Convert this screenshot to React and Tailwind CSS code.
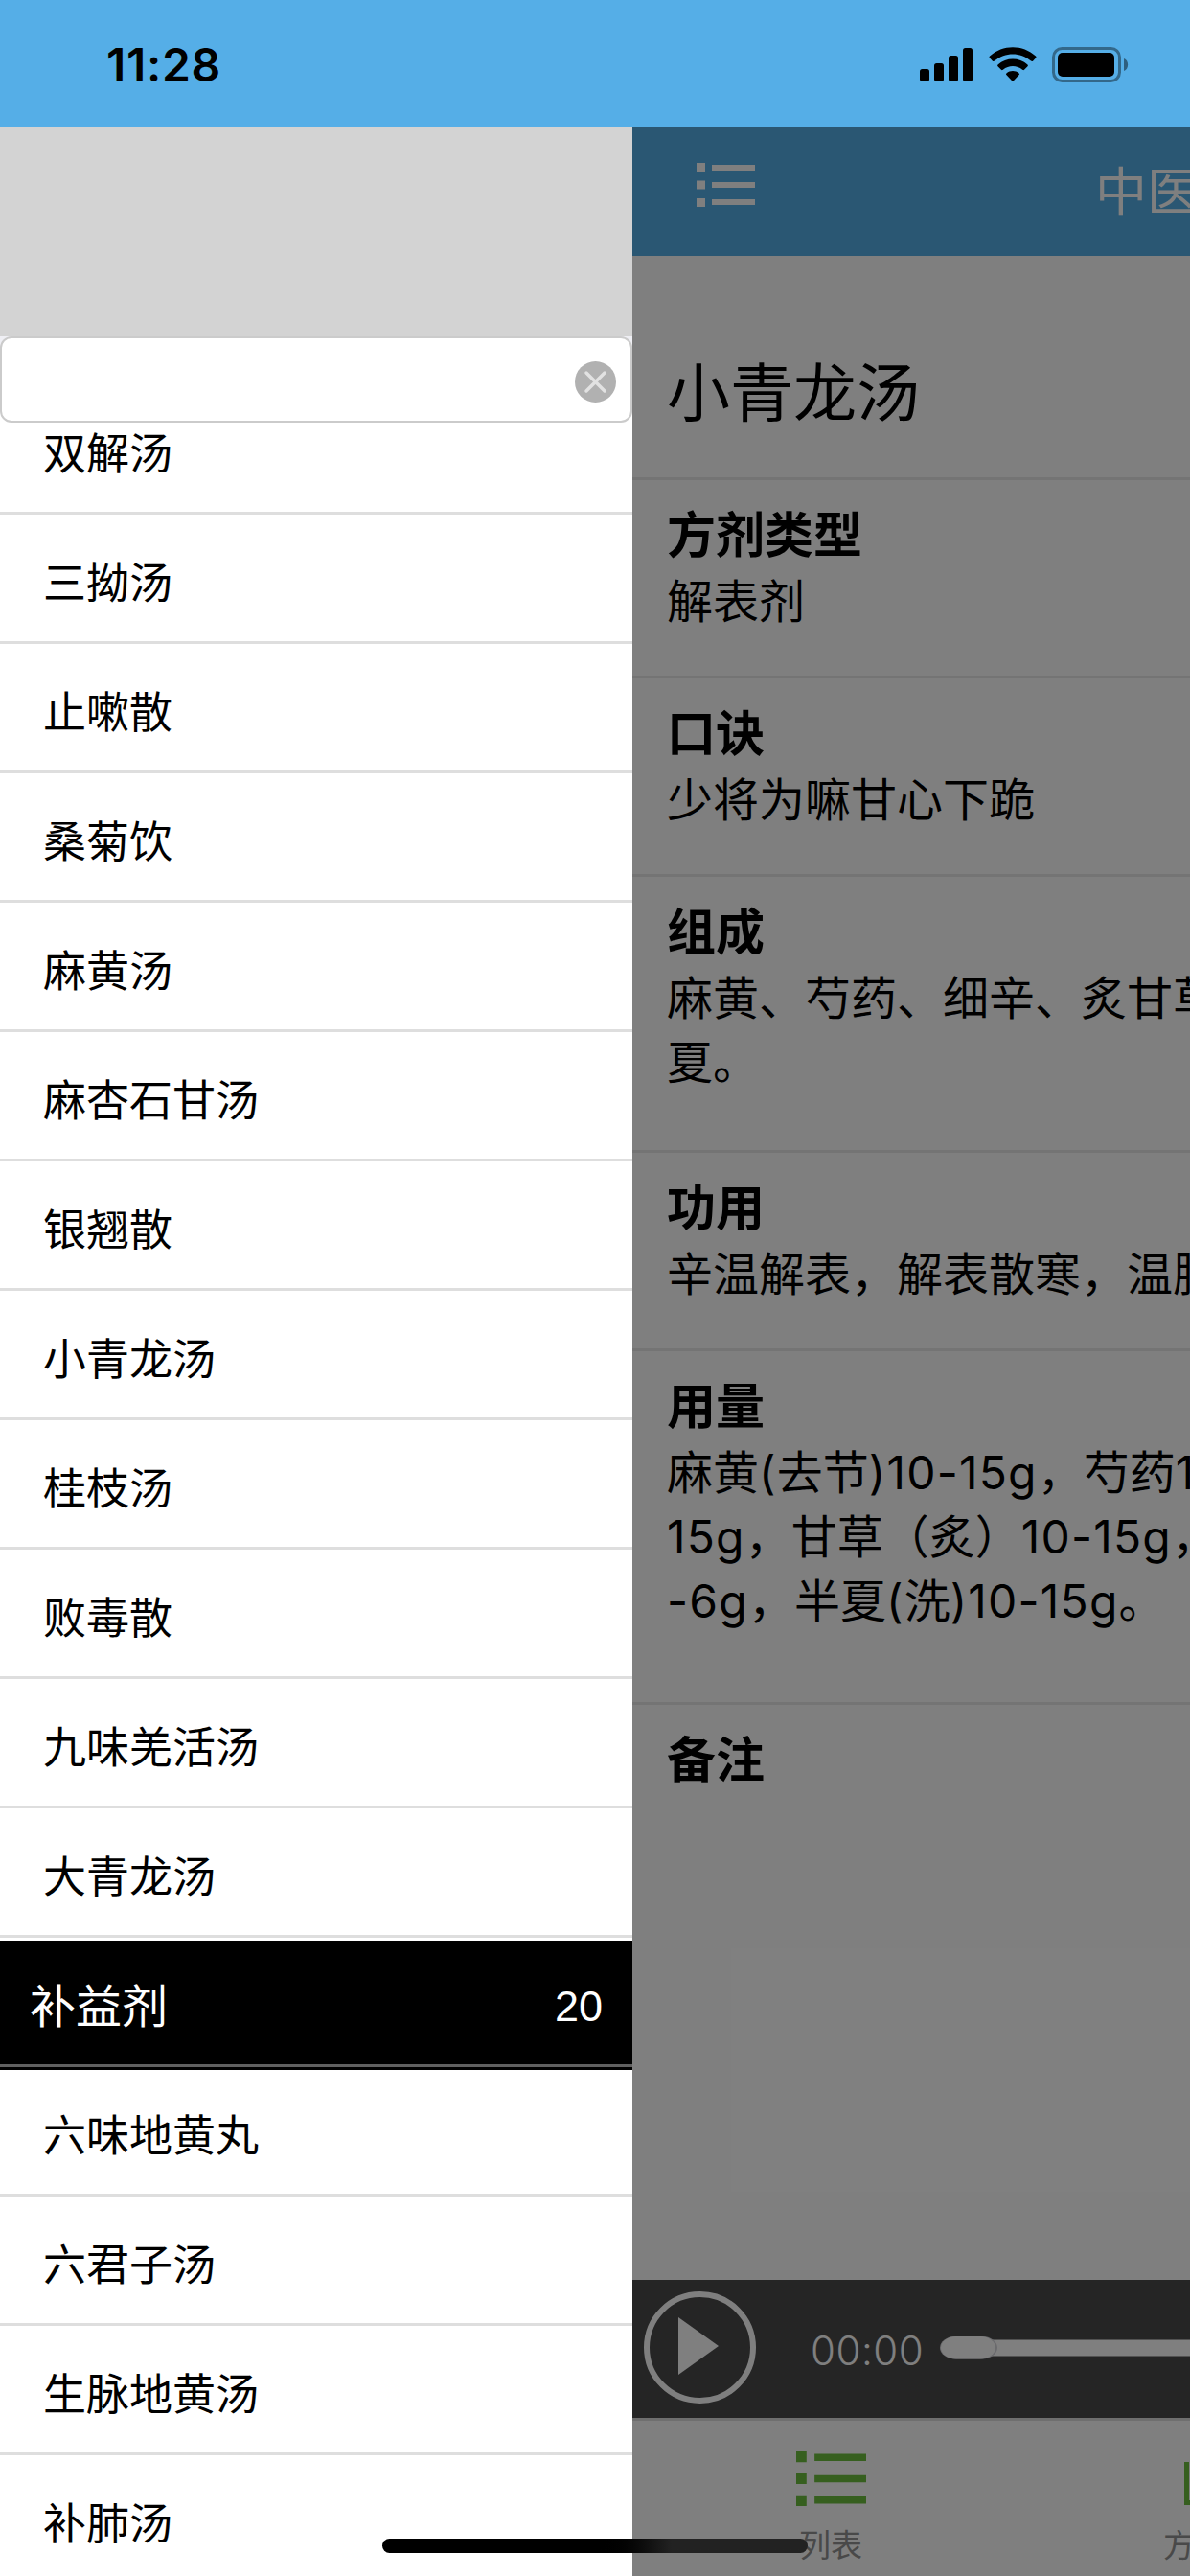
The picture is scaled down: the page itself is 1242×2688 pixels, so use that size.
import clsx from "clsx";

const formulas = [
  { name: "双解汤" },
  { name: "三拗汤" },
  { name: "止嗽散" },
  { name: "桑菊饮" },
  { name: "麻黄汤" },
  { name: "麻杏石甘汤" },
  { name: "银翘散" },
  { name: "小青龙汤" },
  { name: "桂枝汤" },
  { name: "败毒散" },
  { name: "九味羌活汤" },
  { name: "大青龙汤" },
  { name: "补益剂", count: 20 },
  { name: "六味地黄丸" },
  { name: "六君子汤" },
  { name: "生脉地黄汤" },
  { name: "补肺汤" },
];

const sections = [
  { title: "方剂类型", lines: ["解表剂"], height: "h-[207px]" },
  { title: "口诀", lines: ["少将为嘛甘心下跪"], height: "h-[207px]" },
  {
    title: "组成",
    lines: ["麻黄、芍药、细辛、炙甘草", "夏。"],
    height: "h-[288px]",
  },
  {
    title: "功用",
    lines: ["辛温解表，解表散寒，温肺"],
    height: "h-[207px]",
  },
  {
    title: "用量",
    lines: ["麻黄(去节)10-15g，芍药1", "15g，甘草（炙）10-15g，", "-6g，半夏(洗)10-15g。"],
    height: "h-[369px]",
  },
];

const StatusBar = () => (
  <div className="flex h-[132px] shrink-0 items-start justify-between bg-[#55aee7] pl-[111px] pr-[64px]">
    <span className="mt-[39px] font-['Inter'] text-[48px] leading-[58px] font-semibold tracking-[0.7px]">
      11:28
    </span>
    <div className="mt-[49px] flex items-start">
      <svg width="56" height="37" viewBox="0 0 56 37" className="mr-[16px]">
        <rect x="0" y="23" width="10" height="13" rx="2.5" />
        <rect x="15" y="17" width="10" height="19" rx="2.5" />
        <rect x="30" y="9" width="10" height="27" rx="2.5" />
        <rect x="45" y="1" width="10" height="35" rx="2.5" />
      </svg>
      <svg width="50" height="37" viewBox="0 0 50 37" className="mr-[16px]">
        <path d="M1 11.5 Q0 10.500 1 9.500 C14.500 -3 35.500 -3 49 9.500 Q50 10.500 49 11.500 L46 14.700 Q45 15.500 44 14.600 C33 5 17 5 6 14.600 Q5 15.500 4 14.700 Z" />
        <path d="M9.500 20.200 Q8.600 19.300 9.500 18.400 C18.500 10.500 31.500 10.500 40.500 18.400 Q41.400 19.300 40.500 20.200 L37 23.800 Q36.200 24.600 35.200 23.800 C29 18.800 21 18.800 14.800 23.800 Q13.800 24.600 13 23.800 Z" />
        <path d="M18.300 29 Q17.500 28.200 18.400 27.400 C22.500 24.200 27.500 24.200 31.600 27.400 Q32.500 28.200 31.700 29 L25.800 35.300 Q25 36.200 24.200 35.300 Z" />
      </svg>
      <svg width="80" height="37" viewBox="0 0 80 37">
        <rect
          x="1.500"
          y="1.500"
          width="69"
          height="34"
          rx="9"
          fill="none"
          stroke="#000"
          strokeOpacity="0.4"
          strokeWidth="3"
        />
        <rect x="6" y="6" width="59" height="25" rx="5" />
        <path d="M75 12 C80.500 14 80.500 23 75 25 Z" fillOpacity="0.45" />
      </svg>
    </div>
  </div>
);

const ListIcon = ({ className }) => (
  <svg viewBox="0 0 61 46" preserveAspectRatio="none" className={className}>
    <path d="M0 0H9V9H0ZM0 18.500H9V27.500H0ZM0 37H9V46H0ZM16 2H61V8H16ZM16 20H61V26H16ZM16 38H61V44H16Z" />
  </svg>
);

const FormulaRow = ({ name, count }) => (
  <li
    className={clsx(
      "flex h-[135px] shrink-0 flex-col",
      count ? "bg-black text-white" : "bg-white text-black"
    )}
  >
    <div
      className={clsx(
        "flex h-[129px] items-center justify-between pt-[8px]",
        count ? "px-[31px] text-[48px]" : "pl-[45px] text-[45px]"
      )}
    >
      <span>{name}</span>
      {count && (
        <span className="font-['Liberation_Sans'] text-[45px]">{count}</span>
      )}
    </div>
    <div className={clsx("h-[3px]", count ? "bg-[#606060]" : "bg-[#dedede]")} />
  </li>
);

const Sidebar = () => (
  <aside className="flex w-[660px] shrink-0 flex-col overflow-hidden bg-white">
    <div className="h-[219px] shrink-0 bg-[#d3d3d3]" />
    <div className="shrink-0 bg-linear-to-b from-[#efeff4] from-50% to-white to-50%">
      <div className="flex h-[90px] items-center justify-end rounded-[12px] border-2 border-[#cbcbcb] bg-white pr-[15px]">
        <svg width="43" height="43" viewBox="0 0 43 43" className="mt-[5px]">
          <circle cx="21.500" cy="21.500" r="21.500" fill="#b1b1b1" />
          <path
            d="M12 12L31 31M31 12L12 31"
            stroke="#e2e2e2"
            strokeWidth="3.500"
            strokeLinecap="round"
          />
        </svg>
      </div>
    </div>
    <div className="min-h-0 flex-1 overflow-hidden">
      <ul className="-mt-[36px] flex flex-col">
        {formulas.map((item) => (
          <FormulaRow key={item.name} {...item} />
        ))}
      </ul>
    </div>
  </aside>
);

// doses get a little extra tracking, the Chinese text around them does not
const Line = ({ text }) => (
  <p className="text-[48px] leading-[67px]">
    {text.split(/([\w()-]+)/).map((part, i) =>
      i % 2 ? (
        <span key={i} className="tracking-[1.2px]">
          {part}
        </span>
      ) : (
        part
      )
    )}
  </p>
);

const Player = () => (
  <div className="flex h-[144px] shrink-0 items-center bg-[#4a4a4a] pl-[12px]">
    <svg width="117" height="117" viewBox="0 0 117 117" className="-mt-[3px] shrink-0">
      <circle cx="58.500" cy="58.500" r="55.500" fill="none" stroke="#fff" strokeWidth="6" />
      <path d="M36 27L78 57L36 87Z" fill="#fff" />
    </svg>
    <span className="mt-[3px] ml-[57px] w-[134px] shrink-0 font-['Inter'] text-[42px] leading-none font-light tracking-[0.5px] text-white">
      00:00
    </span>
    <svg width="262" height="24" viewBox="0 0 262 24" className="-mt-[3px] shrink-0">
      <rect x="30" y="3.500" width="232" height="17" fill="#fff" />
      <rect x="1" y="0" width="60" height="23.500" rx="16" fill="#d4d4da" />
      <rect x="2" y="0" width="57" height="23.500" rx="16" fill="#fff" />
    </svg>
  </div>
);

const TabBar = () => (
  <nav className="flex h-[165px] shrink-0 border-t-3 border-[#dedede] text-[33px] leading-[36px] text-[#929292]">
    <div className="flex w-[414px] shrink-0 flex-col items-center pt-[32px]">
      <ListIcon className="h-[57px] w-[73px] fill-[#6cbe3e]" />
      <span className="mt-[23px]">列表</span>
    </div>
    <div className="flex w-[168px] shrink-0 flex-col pt-[32px] pl-[141px]">
      <svg width="27" height="57" viewBox="0 0 27 57" className="fill-[#6cbe3e]">
        <path d="M21 11H26V51H27V56H21Z" />
      </svg>
      <span className="mt-[23px] -ml-px">方</span>
    </div>
  </nav>
);

const Detail = () => (
  <main className="relative flex w-[582px] shrink-0 flex-col overflow-hidden bg-white">
    <header className="flex h-[135px] shrink-0 items-start justify-between bg-[#55aee7] pl-[67px]">
      <ListIcon className="mt-[38px] h-[46px] w-[61px] fill-white" />
      <span className="mt-[31px] w-[99px] overflow-hidden text-[54px] leading-[76px] whitespace-nowrap text-white">
        中医
      </span>
    </header>
    <h1 className="flex h-[234px] shrink-0 items-center border-b-3 border-[#e8e8e8] pt-[54px] pl-[36px] text-[66px] leading-none font-normal">
      小青龙汤
    </h1>
    {sections.map(({ title, lines, height }) => (
      <section
        key={title}
        className={clsx(
          "shrink-0 border-b-3 border-[#e8e8e8] pt-[23px] pl-[36px] whitespace-nowrap",
          height
        )}
      >
        <h2 className="text-[51px] leading-[70px] font-bold">{title}</h2>
        {lines.map((line) => (
          <Line key={line} text={line} />
        ))}
      </section>
    ))}
    <section className="flex-1 pt-[23px] pl-[36px]">
      <h2 className="text-[51px] leading-[70px] font-bold">备注</h2>
    </section>
    <Player />
    <TabBar />
    {/* dims the page while the drawer is open */}
    <div className="absolute inset-0 bg-black/50" />
  </main>
);

const App = () => {
  return (
    <div
      lang="zh-CN"
      className="relative flex h-[2688px] w-[1242px] flex-col overflow-hidden font-['Inter','Noto_Sans_CJK_SC',sans-serif] text-black"
    >
      <StatusBar />
      <div className="flex min-h-0 flex-1">
        <Sidebar />
        <Detail />
      </div>
      <div className="absolute bottom-[24px] left-[399px] h-[15px] w-[444px] rounded-full bg-linear-to-r from-black from-50% to-[#222222] to-68%" />
    </div>
  );
};

export default App;
